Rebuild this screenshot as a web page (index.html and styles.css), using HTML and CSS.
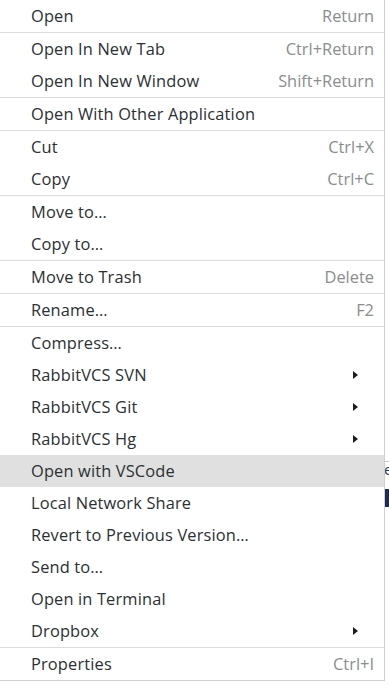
FILE: index.html
```html
<!DOCTYPE html>
<html>
<head>
<meta charset="utf-8">
<link rel="stylesheet" href="styles.css">
</head>
<body>
<div class="screen">
  <div class="menu">
    <div class="item"><span class="label">Open</span><span class="accel">Return</span></div>
    <div class="sep"></div>
    <div class="item"><span class="label">Open In New Tab</span><span class="accel">Ctrl+Return</span></div>
    <div class="item"><span class="label">Open In New Window</span><span class="accel">Shift+Return</span></div>
    <div class="sep"></div>
    <div class="item"><span class="label">Open With Other Application</span></div>
    <div class="sep"></div>
    <div class="item"><span class="label">Cut</span><span class="accel">Ctrl+X</span></div>
    <div class="item"><span class="label">Copy</span><span class="accel">Ctrl+C</span></div>
    <div class="sep"></div>
    <div class="item"><span class="label">Move to…</span></div>
    <div class="item"><span class="label">Copy to…</span></div>
    <div class="sep"></div>
    <div class="item"><span class="label">Move to Trash</span><span class="accel">Delete</span></div>
    <div class="sep"></div>
    <div class="item"><span class="label">Rename…</span><span class="accel">F2</span></div>
    <div class="sep"></div>
    <div class="item"><span class="label">Compress…</span></div>
    <div class="item sub"><span class="label">RabbitVCS SVN</span><span class="arrow"></span></div>
    <div class="item sub"><span class="label">RabbitVCS Git</span><span class="arrow"></span></div>
    <div class="item sub"><span class="label">RabbitVCS Hg</span><span class="arrow"></span></div>
    <div class="item hover"><span class="label">Open with VSCode</span></div>
    <div class="item"><span class="label">Local Network Share</span></div>
    <div class="item"><span class="label">Revert to Previous Version…</span></div>
    <div class="item"><span class="label">Send to…</span></div>
    <div class="item"><span class="label">Open in Terminal</span></div>
    <div class="item sub"><span class="label">Dropbox</span><span class="arrow"></span></div>
    <div class="sep"></div>
    <div class="item"><span class="label">Properties</span><span class="accel">Ctrl+I</span></div>
  </div>
  <div class="behind">
    <div class="bg-line"></div>
    <div class="bg-text">e</div>
    <div class="bg-bar"></div>
  </div>
</div>
</body>
</html>
```
FILE: styles.css
```css
html, body {
  margin: 0;
  padding: 0;
  background: #ffffff;
}
.screen {
  display: flex;
  width: 389px;
  height: 686px;
  overflow: hidden;
}
.menu {
  width: 384px;
  flex: none;
  background: #ffffff;
  border-right: 1px solid #cfcfcf;
  border-bottom: 1px solid #cfcfcf;
  align-self: flex-start;
  font-family: "Open Sans", "Noto Sans", sans-serif;
  font-size: 16.4px;
  color: #2b3033;
}
.item {
  height: 32px;
  display: flex;
  align-items: center;
  padding: 0 10px 0 31px;
}
.item.hover {
  background: #e0e0e0;
}
.label {
  flex: 1;
  white-space: nowrap;
  line-height: 20px;
  padding-bottom: 1px;
  letter-spacing: 0.15px;
}
.accel {
  color: #8a8d8e;
  white-space: nowrap;
  line-height: 20px;
  padding-bottom: 1px;
}
.arrow {
  width: 0;
  height: 0;
  border-top: 4px solid transparent;
  border-bottom: 4px solid transparent;
  border-left: 5px solid #1e1e1e;
  margin-right: 16px;
}
.sep {
  height: 1px;
  background: #dcdcdc;
}
.behind {
  flex: 1;
  position: relative;
  overflow: hidden;
}
.bg-line {
  position: absolute;
  top: 461px;
  left: 0;
  right: 0;
  height: 1px;
  background: #c8c8c8;
}
.bg-text {
  position: absolute;
  top: 459px;
  left: -1px;
  font-family: "Open Sans", sans-serif;
  font-size: 15px;
  color: #2a3a5a;
}
.bg-bar {
  position: absolute;
  top: 489px;
  left: 0;
  right: 0;
  height: 18px;
  background: #1f2d4d;
}
```
